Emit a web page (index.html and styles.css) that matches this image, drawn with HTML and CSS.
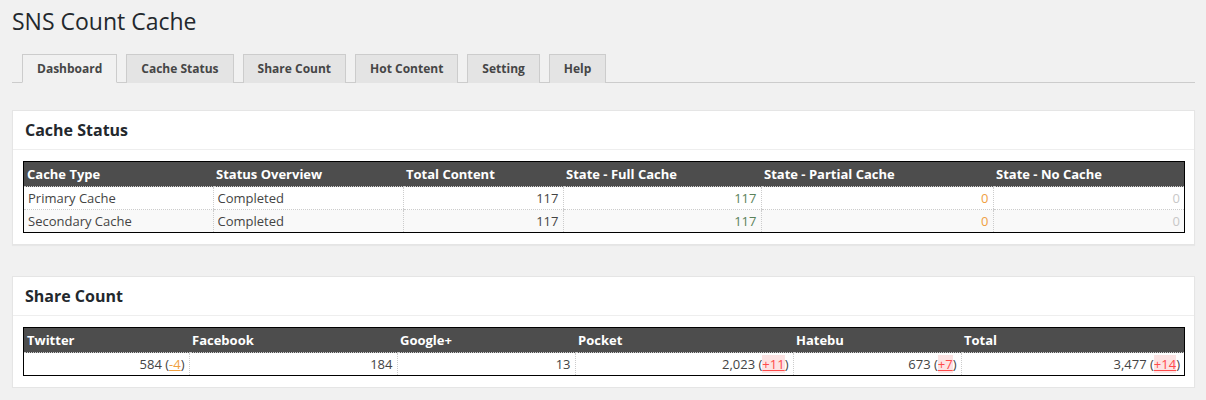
FILE: index.html
```html
<!DOCTYPE html>
<html>
<head>
<meta charset="utf-8">
<link rel="stylesheet" href="styles.css">
</head>
<body>
<div class="wrap">
  <h2 class="page-title">SNS Count Cache</h2>
  <nav class="tabs">
    <a class="tab active">Dashboard</a>
    <a class="tab">Cache Status</a>
    <a class="tab">Share Count</a>
    <a class="tab">Hot Content</a>
    <a class="tab">Setting</a>
    <a class="tab">Help</a>
  </nav>

  <section class="card card-first">
    <h3 class="card-title">Cache Status</h3>
    <div class="card-body">
      <table class="data cache">
        <thead>
          <tr>
            <th>Cache Type</th>
            <th>Status Overview</th>
            <th>Total Content</th>
            <th>State - Full Cache</th>
            <th>State - Partial Cache</th>
            <th>State - No Cache</th>
          </tr>
        </thead>
        <tbody>
          <tr>
            <td>Primary Cache</td>
            <td>Completed</td>
            <td class="num">117</td>
            <td class="num full">117</td>
            <td class="num partial">0</td>
            <td class="num none">0</td>
          </tr>
          <tr class="alt">
            <td>Secondary Cache</td>
            <td>Completed</td>
            <td class="num">117</td>
            <td class="num full">117</td>
            <td class="num partial">0</td>
            <td class="num none">0</td>
          </tr>
        </tbody>
      </table>
    </div>
  </section>

  <section class="card card-second">
    <h3 class="card-title">Share Count</h3>
    <div class="card-body">
      <table class="data share">
        <thead>
          <tr>
            <th>Twitter</th>
            <th>Facebook</th>
            <th>Google+</th>
            <th>Pocket</th>
            <th>Hatebu</th>
            <th>Total</th>
          </tr>
        </thead>
        <tbody>
          <tr>
            <td class="num">584 (<span class="down">-4</span>)</td>
            <td class="num">184</td>
            <td class="num">13</td>
            <td class="num">2,023 (<span class="up">+11</span>)</td>
            <td class="num">673 (<span class="up">+7</span>)</td>
            <td class="num">3,477 (<span class="up">+14</span>)</td>
          </tr>
        </tbody>
      </table>
    </div>
  </section>
</div>
</body>
</html>
```

FILE: styles.css
```css
html, body {
  margin: 0;
  padding: 0;
  background: #f1f1f1;
}
body {
  font-family: "Open Sans", "Liberation Sans", sans-serif;
  font-size: 13px;
  color: #444;
}
.wrap {
  padding: 0 11px 0 12px;
}
.page-title {
  margin: 0;
  padding: 7px 0 0;
  font-size: 23px;
  line-height: 29px;
  font-weight: 400;
  color: #23282d;
}
.tabs {
  display: flex;
  gap: 8px;
  margin-top: 18px;
  padding-left: 10px;
  border-bottom: 1px solid #ccc;
}
.tab {
  display: block;
  padding: 5px 14px 4px;
  border: 1px solid #ccc;
  border-bottom: none;
  background: #e4e4e4;
  color: #464646;
  font-size: 12px;
  font-weight: 700;
  line-height: 18px;
  margin-bottom: -1px;
}
.tab:nth-child(n+2) {
  margin-left: 1px;
}
.tab.active {
  background: #f1f1f1;
  color: #464646;
  border-bottom: 1px solid #f1f1f1;
}
.card {
  background: #fff;
  border: 1px solid #e5e5e5;
  box-shadow: 0 1px 1px rgba(0,0,0,.04);
}
.card-first {
  margin-top: 27px;
}
.card-second {
  margin-top: 31px;
}
.card-title {
  margin: 0;
  padding: 9px 12px;
  font-size: 16px;
  line-height: 20px;
  font-weight: 700;
  color: #23282d;
  border-bottom: 1px solid #eee;
}
.card-body {
  padding: 11px 9px 11px 10px;
}
.data {
  width: 100%;
  border-collapse: collapse;
  border: 1px solid #000;
  table-layout: fixed;
}
.data th {
  background: #4d4d4d;
  color: #fff;
  font-weight: 700;
  text-align: left;
  padding: 3px 3px 2px;
  line-height: 19px;
  border-bottom: 1px dotted #ccc;
}
.data td {
  padding: 2px 4px 1px;
  line-height: 19px;
  color: #444;
  border-left: 1px dotted #ccc;
  border-bottom: 1px dotted #ccc;
}
.data td:first-child {
  border-left: none;
}
.data tr:last-child td {
  border-bottom: none;
}
.data tr.alt td {
  background: #f9f9f9;
}
.num {
  text-align: right;
}
.data td.num.full { color: #5a825a; }
.data td.num.partial { color: #f0a041; }
.data td.num.none { color: #c8c8c8; }

.cache th:nth-child(1) { width: 183px; }
.cache th:nth-child(2) { width: 184px; }
.cache th:nth-child(3) { width: 154px; }
.cache th:nth-child(4) { width: 192px; }
.cache th:nth-child(5) { width: 226px; }

.share th:nth-child(1) { width: 159px; }
.share th:nth-child(2) { width: 202px; }
.share th:nth-child(3) { width: 172px; }
.share th:nth-child(4) { width: 212px; }
.share th:nth-child(5) { width: 162px; }

.down {
  color: #f0a041;
  text-decoration: underline;
}
.up {
  color: #ff4b4b;
  background: #fde3e3;
  text-decoration: underline;
}
```
